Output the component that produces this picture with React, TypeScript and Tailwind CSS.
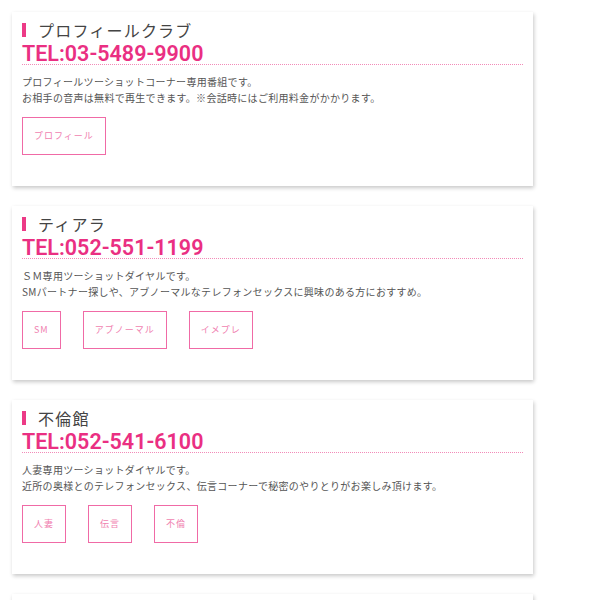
const CLUBS = [
  {
    name: "プロフィールクラブ",
    tel: "03-5489-9900",
    lines: [
      "プロフィールツーショットコーナー専用番組です。",
      "お相手の音声は無料で再生できます。※会話時にはご利用料金がかかります。",
    ],
    tags: ["プロフィール"],
  },
  {
    name: "ティアラ",
    tel: "052-551-1199",
    lines: [
      "ＳＭ専用ツーショットダイヤルです。",
      "SMパートナー探しや、アブノーマルなテレフォンセックスに興味のある方におすすめ。",
    ],
    tags: ["SM", "アブノーマル", "イメプレ"],
  },
  {
    name: "不倫館",
    tel: "052-541-6100",
    lines: [
      "人妻専用ツーショットダイヤルです。",
      "近所の奥様とのテレフォンセックス、伝言コーナーで秘密のやりとりがお楽しみ頂けます。",
    ],
    tags: ["人妻", "伝言", "不倫"],
  },
];

const jp = "font-['Noto_Sans_CJK_JP','Noto_Sans',sans-serif]";

function ClubCard({ club }: { club: (typeof CLUBS)[number] }) {
  return (
    <div className="h-[174px] w-[521px] shrink-0 bg-white px-[10px] pt-[10px] shadow-[1px_2px_4px_rgba(0,0,0,0.22)]">
      <div className="flex items-center gap-3">
        <span className="h-[14px] w-[4px] bg-[#ec3a86]" />
        <h2 className={`${jp} text-[16px] leading-[16px] tracking-[1.2px] text-[#444]`}>
          {club.name}
        </h2>
      </div>
      <p className="mt-[6px] border-b border-dotted border-[#f28bb8] font-['Roboto',sans-serif] text-[21.5px] font-semibold leading-[20px] text-[#ea2f82]">
        TEL:{club.tel}
      </p>
      <div className={`${jp} mt-[9px] text-[10px] leading-[16px] tracking-[0.3px] text-[#555]`}>
        {club.lines.map((l) => (
          <p key={l}>{l}</p>
        ))}
      </div>
      <div className="mt-[11px] flex gap-[22px]">
        {club.tags.map((t) => (
          <span
            key={t}
            className={`${jp} flex h-[38px] items-center border border-[#f06aa6] px-[11px] text-[9px] tracking-[1px] text-[#f07fb0]`}
          >
            {t}
          </span>
        ))}
      </div>
    </div>
  );
}

export default function App() {
  return (
    <div className="flex h-[600px] flex-col gap-[20px] overflow-hidden bg-white pl-[12px] pt-[12px]">
      {CLUBS.map((c) => (
        <ClubCard key={c.name} club={c} />
      ))}
      <div className="h-[174px] w-[521px] shrink-0 bg-white shadow-[1px_2px_4px_rgba(0,0,0,0.22)]" />
    </div>
  );
}
